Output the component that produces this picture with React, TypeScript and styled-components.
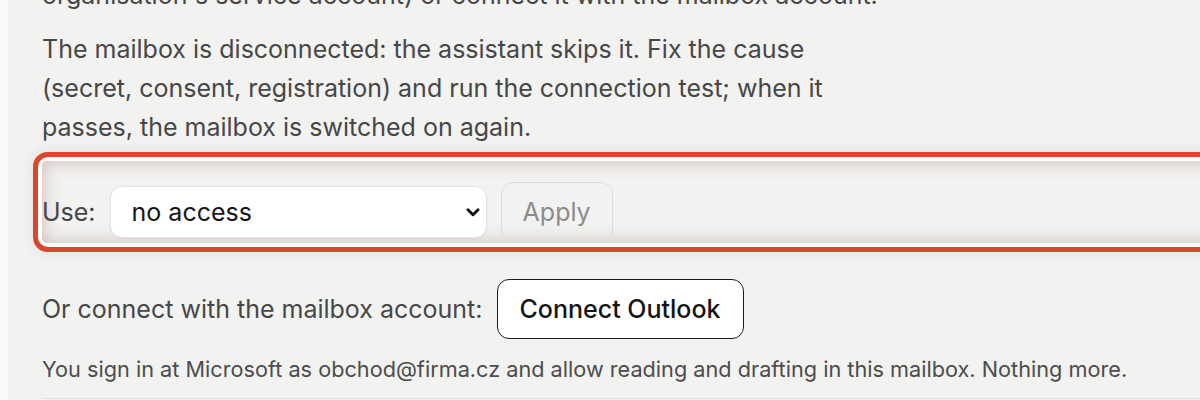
import styled, { createGlobalStyle } from 'styled-components';

const GlobalStyle = createGlobalStyle`
  html, body {
    margin: 0;
    background: #fafaf9;
    overflow: hidden;
  }
  body {
    font-family: 'Inter', 'Noto Sans', sans-serif;
  }
`;

const Panel = styled.div`
  margin-left: 8px;
  width: 1300px;
  height: 400px;
  overflow: hidden;
  background: #f2f2f0;
  padding-left: 34px;
  box-sizing: border-box;
`;

const Content = styled.div`
  margin-top: -24px;
  display: flex;
  flex-direction: column;
`;

const Paragraph = styled.p<{ $nowrap?: boolean }>`
  margin: 0 0 15px;
  max-width: 810px;
  font-size: 25px;
  line-height: 39px;
  color: #474747;
  white-space: ${(p) => (p.$nowrap ? 'nowrap' : 'normal')};
`;

const Highlight = styled.div`
  margin-top: -1px;
  padding: 21px 0 1px;
  border-radius: 6px;
  box-shadow:
    0 0 0 4px #ffffff,
    0 0 0 9px #d9482c,
    0 0 14px 10px rgba(0, 0, 0, 0.07),
    inset 0 0 16px 2px rgba(150, 100, 95, 0.32);
`;

const Row = styled.div`
  display: flex;
  align-items: center;
  gap: 14px;
`;

const Label = styled.span`
  font-size: 25px;
  color: #474747;
`;

const SelectWrap = styled.div`
  position: relative;
  display: flex;
`;

const Select = styled.select`
  appearance: none;
  width: 377px;
  height: 52px;
  padding: 0 40px 0 21px;
  border: 1px solid #e4e4e2;
  border-radius: 12px;
  background: #ffffff;
  box-shadow: 0 1px 2px rgba(0, 0, 0, 0.05);
  font-family: 'Inter', sans-serif;
  font-size: 25px;
  color: #161616;
  outline: none;
`;

const Chevron = styled.svg`
  position: absolute;
  right: 5px;
  top: 50%;
  transform: translateY(-50%);
  pointer-events: none;
`;

const Button = styled.button<{ $primary?: boolean }>`
  height: 60px;
  padding: 0 ${(p) => (p.$primary ? '22px' : '21px')};
  border-radius: 12px;
  border: ${(p) => (p.$primary ? '1.5px solid #1c1c1c' : '1px solid #dcdcda')};
  background: ${(p) => (p.$primary ? '#ffffff' : 'transparent')};
  color: ${(p) => (p.$primary ? '#141414' : '#8c8c8c')};
  font-family: 'Inter', sans-serif;
  font-size: 25px;
  font-weight: ${(p) => (p.$primary ? 500 : 400)};
  cursor: ${(p) => (p.$primary ? 'pointer' : 'default')};
`;

const ConnectRow = styled(Row)`
  margin-top: 36px;
`;

const Note = styled.p`
  margin: 14px 0 0;
  font-size: 21.7px;
  line-height: 32px;
  color: #4c4c4c;
  white-space: nowrap;
`;

const Divider = styled.div`
  margin-top: 13px;
  border-top: 1px solid #e2e2e0;
`;

export default function App() {
  return (
    <>
      <GlobalStyle />
      <Panel>
        <Content>
          <Paragraph $nowrap>
            organisation's service account) or connect it with the mailbox account.
          </Paragraph>
          <Paragraph>
            The mailbox is disconnected: the assistant skips it. Fix the cause (secret, consent,
            registration) and run the connection test; when it passes, the mailbox is switched on
            again.
          </Paragraph>
          <Highlight>
            <Row>
              <Label>Use:</Label>
              <SelectWrap>
                <Select defaultValue="none">
                  <option value="none">no access</option>
                  <option value="service">service account</option>
                </Select>
                <Chevron width="18" height="18" viewBox="0 0 16 16">
                  <path
                    d="M3.5 6l4.5 4.5L12.5 6"
                    fill="none"
                    stroke="#111"
                    strokeWidth="2.6"
                    strokeLinecap="round"
                    strokeLinejoin="round"
                  />
                </Chevron>
              </SelectWrap>
              <Button disabled>Apply</Button>
            </Row>
          </Highlight>
          <ConnectRow>
            <Label>Or connect with the mailbox account:</Label>
            <Button $primary>Connect Outlook</Button>
          </ConnectRow>
          <Note>
            You sign in at Microsoft as obchod@firma.cz and allow reading and drafting in this
            mailbox. Nothing more.
          </Note>
          <Divider />
        </Content>
      </Panel>
    </>
  );
}
